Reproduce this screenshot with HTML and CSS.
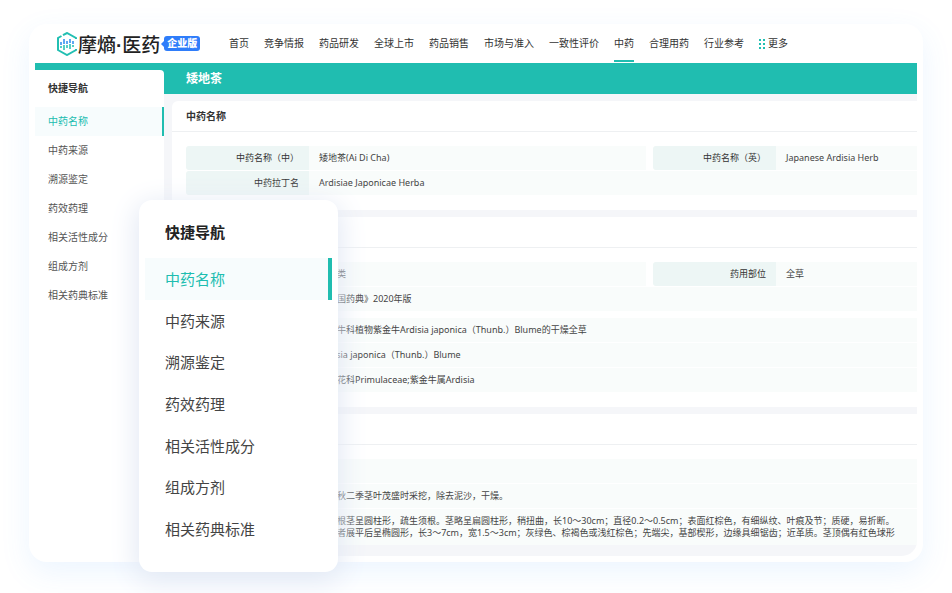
FILE: index.html
```
<!DOCTYPE html>
<html lang="zh-CN">
<head>
	<meta charset="utf-8">
	<title>矮地茶 - 摩熵医药</title>
	<link rel="stylesheet" href="styles.css">
</head>
<body>
	<div class="shell">
		<header class="header">
			<a class="logo" href="#">
				<svg class="logo-mark" viewBox="0 0 22 24" fill="none" stroke-width="2">
					<path d="M7 3.200L11 1l9 5v1M5.500 4L2 6v12l9 5 9-5v-1" stroke="#22bfb2"/>
					<path d="M5 10v3M8 7v5M11 9v3M14 7v4M17 9v3" stroke="#2a8cf0" stroke-width="1.500"/>
					<path d="M5 14v2M8 13v5M11 13v3M14 12v5M17 13v2" stroke="#22bfb2" stroke-width="1.500"/>
				</svg>
				<span class="logo-text">摩熵<span class="dot">·</span>医药</span>
				<span class="badge">企业版</span>
			</a>
			<nav class="nav">
				<a href="#">首页</a>
				<a href="#">竞争情报</a>
				<a href="#">药品研发</a>
				<a href="#">全球上市</a>
				<a href="#">药品销售</a>
				<a href="#">市场与准入</a>
				<a href="#">一致性评价</a>
				<a href="#" class="active">中药</a>
				<a href="#">合理用药</a>
				<a href="#">行业参考</a>
				<a href="#" class="more">
					<svg viewBox="0 0 6 10" fill="#22bfb2">
						<path d="M0 0h2v2H0zM4 0h2v2H4zM0 4h2v2H0zM4 4h2v2H4zM0 8h2v2H0zM4 8h2v2H4z"/>
					</svg>更多</a>
			</nav>
		</header>

		<div class="workspace">
			<aside class="sidebar">
				<h2>快捷导航</h2>
				<ul>
					<li><a href="#name" class="active">中药名称</a></li>
					<li><a href="#source">中药来源</a></li>
					<li><a href="#identify">溯源鉴定</a></li>
					<li><a href="#effect">药效药理</a></li>
					<li><a href="#component">相关活性成分</a></li>
					<li><a href="#formula">组成方剂</a></li>
					<li><a href="#standard">相关药典标准</a></li>
				</ul>
			</aside>

			<main class="main">
				<h1>矮地茶</h1>

				<section class="panel" id="name">
					<h2>中药名称</h2>
					<dl>
						<div class="row pair">
							<dt>中药名称（中）</dt><dd>矮地茶(Ai Di Cha)</dd>
							<dt>中药名称（英）</dt><dd>Japanese Ardisia Herb</dd>
						</div>
						<div class="row"><dt>中药拉丁名</dt><dd>Ardisiae Japonicae Herba</dd></div>
					</dl>
				</section>

				<section class="panel" id="source">
					<h2></h2>
					<dl>
						<div class="row pair">
							<dt></dt><dd>全草类</dd>
							<dt>药用部位</dt><dd>全草</dd>
						</div>
						<div class="row"><dt></dt><dd>《中国药典》2020年版</dd></div>
					</dl>
					<dl>
						<div class="row"><dt></dt><dd>紫金牛科植物紫金牛Ardisia japonica（Thunb.）Blume的干燥全草</dd></div>
						<div class="row"><dt></dt><dd>Ardisia japonica（Thunb.）Blume</dd></div>
						<div class="row"><dt></dt><dd>报春花科Primulaceae;紫金牛属Ardisia</dd></div>
					</dl>
				</section>

				<section class="panel last" id="identify">
					<h2></h2>
					<dl>
						<div class="row"><dt></dt><dd></dd></div>
						<div class="row"><dt></dt><dd>夏、秋二季茎叶茂盛时采挖，除去泥沙，干燥。</dd></div>
						<div class="row"><dt></dt><dd>本品根茎呈圆柱形，疏生须根。茎略呈扁圆柱形，稍扭曲，长10～30cm；直径0.2～0.5cm；表面红棕色，有细纵纹、叶痕及节；质硬，易折断。<br>完整者展平后呈椭圆形，长3～7cm，宽1.5～3cm；灰绿色、棕褐色或浅红棕色；先端尖，基部楔形，边缘具细锯齿；近革质。茎顶偶有红色球形</dd></div>
					</dl>
				</section>
			</main>
		</div>
	</div>

	<aside class="popup">
		<h2>快捷导航</h2>
		<ul>
			<li><a href="#name" class="active">中药名称</a></li>
			<li><a href="#source">中药来源</a></li>
			<li><a href="#identify">溯源鉴定</a></li>
			<li><a href="#effect">药效药理</a></li>
			<li><a href="#component">相关活性成分</a></li>
			<li><a href="#formula">组成方剂</a></li>
			<li><a href="#standard">相关药典标准</a></li>
		</ul>
	</aside>
</body>
</html>
```

FILE: styles.css
```
* {
	box-sizing: border-box;
	margin: 0;
	padding: 0;
}
body {
	position: relative;
	padding: 24px 29px 31px;
	background: #fff;
	color: #333;
	font-family: "Noto Sans", "Noto Sans CJK SC", sans-serif;
	font-size: 10px;
}
a {
	color: inherit;
	text-decoration: none;
}
ul {
	list-style: none;
}

.shell {
	padding: 0 6px 6px;
	background: #fff;
	border-radius: 18px;
	box-shadow: 0 10px 30px rgba(70, 160, 255, .1);
}

/* top bar */
.header {
	display: flex;
	height: 39px;
	padding-left: 21px;
}
.logo {
	display: flex;
	align-items: center;
	width: 173px;
	flex-shrink: 0;
}
.logo-mark {
	width: 22px;
	height: 24px;
}
.logo-text {
	color: #222;
	font-family: "Noto Sans CJK SC", sans-serif;
	font-size: 19px;
	font-weight: 500;
	white-space: nowrap;
}
.logo-text .dot {
	font-family: "Liberation Sans", sans-serif;
	font-weight: bold;
}
.badge {
	position: relative;
	height: 15px;
	margin-left: 4px;
	padding: 0 3px;
	border-radius: 3px;
	background: #2f7dfa;
	color: #fff;
	font-weight: 900;
	line-height: 15px;
	white-space: nowrap;
}
.badge::before {
	content: "";
	position: absolute;
	left: -3px;
	top: 5px;
	border: 3px solid transparent;
	border-left: 0;
	border-right-color: #2f7dfa;
}
.nav {
	display: flex;
	gap: 15px;
	line-height: 39px;
	white-space: nowrap;
}
.nav a.active {
	border-bottom: 2px solid #20bdb0;
	height: 38px;
}
.nav .more {
	display: flex;
	align-items: center;
	gap: 3px;
}
.more svg {
	width: 6px;
	height: 10px;
}

/* teal strip runs behind the sidebar corner */
.workspace {
	display: grid;
	grid-template-columns: 129px minmax(0, 1fr);
	column-gap: 8px;
	overflow: hidden;
	border-bottom-right-radius: 15px;
	background: linear-gradient(#20bdb0 31px, #f5f6f9 31px);
}

.sidebar {
	margin-top: 7px;
	background: #fff;
	border-top-right-radius: 4px;
}
.sidebar h2 {
	padding-left: 13px;
	font-size: 10px;
	line-height: 37px;
}
.sidebar a {
	display: block;
	padding-left: 13px;
	color: #555;
	line-height: 29px;
}
.sidebar a.active,
.popup a.active {
	border-right: 2px solid #20bdb0;
	background: #f7fcfd;
	color: #20bdb0;
}

.main {
	padding-bottom: 11px;
}
.main h1 {
	padding-left: 14px;
	color: #fff;
	font-size: 12px;
	line-height: 31px;
}
.panel {
	margin-top: 7px;
	padding-bottom: 15px;
	border-top-left-radius: 6px;
	background: #fff;
}
.panel.last {
	padding-bottom: 0;
}
.panel h2 {
	height: 31px;
	margin-bottom: 14px;
	padding-left: 14px;
	border-bottom: 1px solid #eef0f2;
	font-size: 10px;
	line-height: 30px;
}
.panel dl {
	display: grid;
	gap: 1px;
	padding-left: 14px;
	font-size: 9px;
	line-height: 12px;
}
.panel dl + dl {
	margin-top: 7px;
}
.row {
	display: grid;
	grid-template-columns: 123px minmax(0, 1fr);
	min-height: 24px;
}
.row.pair {
	grid-template-columns: 123px minmax(0, 337fr) 130px minmax(0, 141fr);
}
.row dt {
	padding: 6px 10px;
	border-radius: 3px 0 0 3px;
	background: #edf6f5;
	text-align: right;
}
.row dd + dt {
	margin-left: 7px;
}
.row dd {
	padding: 6px 10px;
	overflow: hidden;
	background: #f9fcfb;
	color: #444;
	white-space: nowrap;
}

/* enlarged quick navigation floating over the page */
.popup {
	position: absolute;
	left: 139px;
	top: 200px;
	width: 199px;
	padding: 6px 6px 23px;
	border-radius: 13px;
	background: #fff;
	box-shadow: 0 6px 28px 3px #e2e8f4;
	font-size: 15px;
}
.popup h2 {
	padding-left: 20px;
	color: #222;
	font-size: 15px;
	line-height: 52px;
}
.popup ul {
	display: grid;
	grid-auto-rows: 1fr;
	height: 291px;
}
.popup a {
	display: flex;
	align-items: center;
	height: 100%;
	padding-left: 20px;
	color: #444;
}
.popup a.active {
	border-right-width: 4px;
}
```
